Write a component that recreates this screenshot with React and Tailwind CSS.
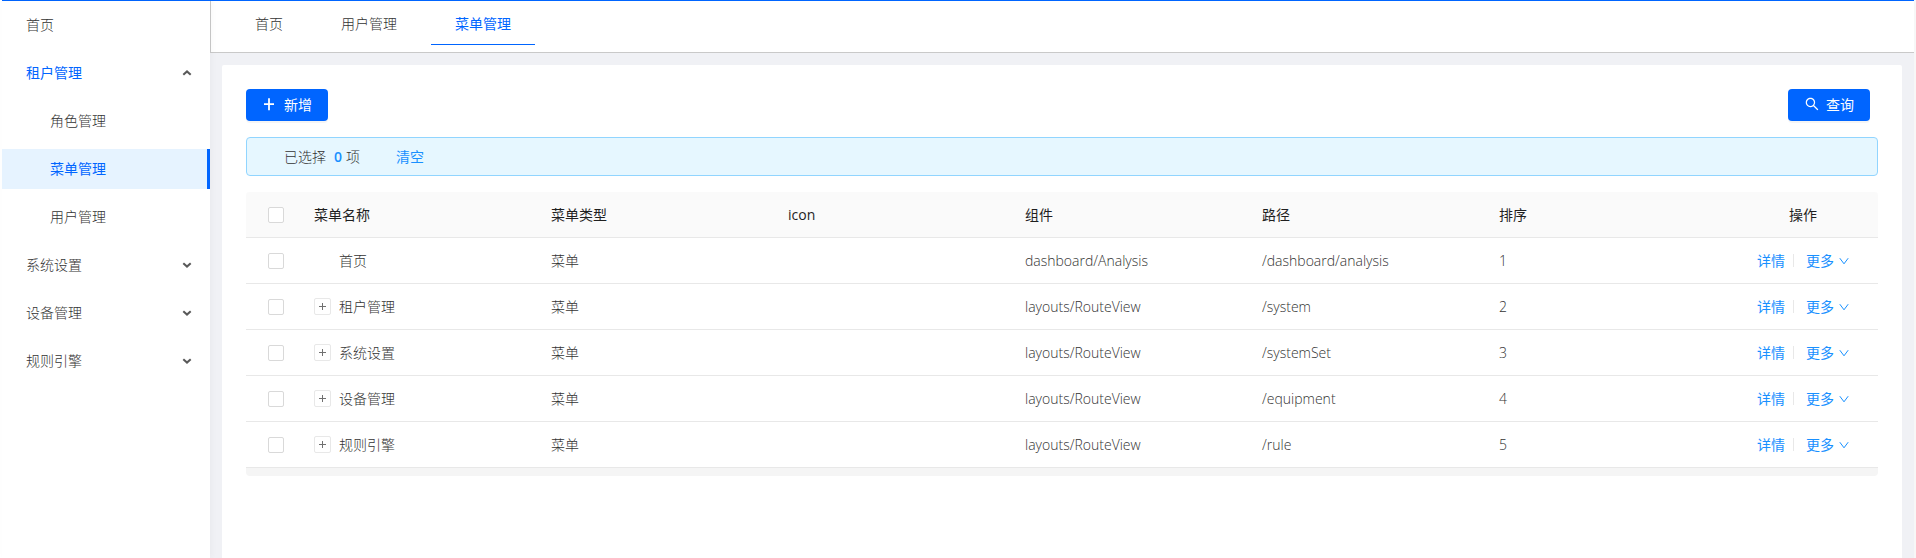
import { AiOutlineSearch } from "react-icons/ai";

const menu = [
  { label: "首页" },
  { label: "租户管理", open: true, children: ["角色管理", "菜单管理", "用户管理"] },
  { label: "系统设置", children: [] },
  { label: "设备管理", children: [] },
  { label: "规则引擎", children: [] },
];

const tabs = ["首页", "用户管理", "菜单管理"];
const active = "菜单管理";

const rows = [
  { name: "首页", leaf: true, component: "dashboard/Analysis", path: "/dashboard/analysis" },
  { name: "租户管理", component: "layouts/RouteView", path: "/system" },
  { name: "系统设置", component: "layouts/RouteView", path: "/systemSet" },
  { name: "设备管理", component: "layouts/RouteView", path: "/equipment" },
  { name: "规则引擎", component: "layouts/RouteView", path: "/rule" },
];

const headings = ["菜单名称", "菜单类型", "icon", "组件", "路径", "排序"];

function Tick({ label }) {
  return (
    <input
      type="checkbox"
      aria-label={label}
      className="block mx-auto size-4 appearance-none rounded-xs border border-[#d9d9d9] bg-white checked:bg-[#0065ff]"
    />
  );
}

function MenuArrow({ up }) {
  return (
    <svg viewBox="0 0 10 10" className="size-2.5" fill="none" stroke="#595959" strokeWidth="2">
      <path d={up ? "M1.3 6.8L5 3.4l3.7 3.4" : "M1.3 3.2L5 6.6l3.7-3.4"} />
    </svg>
  );
}

function Sidebar() {
  return (
    <nav className="z-10 w-52 shrink-0 bg-white pt-1 shadow-[2px_0_6px_rgba(0,21,41,0.03)]">
      <ul className="flex flex-col gap-2">
        {menu.map((item) => (
          <li key={item.label}>
            <a
              href="#"
              className={`flex h-10 items-center justify-between pl-6 pr-4.5 ${item.open ? "font-normal text-[#0065ff]" : ""}`}
            >
              {item.label}
              {item.children && <MenuArrow up={item.open} />}
            </a>
            {item.open && (
              <ul className="mt-2 flex flex-col gap-2">
                {item.children.map((child) => (
                  <li key={child}>
                    <a
                      href="#"
                      className={`flex h-10 items-center pl-12 ${
                        child === active ? "border-r-3 border-[#0065ff] bg-[#e6f3ff] font-normal text-[#0065ff]" : ""
                      }`}
                    >
                      {child}
                    </a>
                  </li>
                ))}
              </ul>
            )}
          </li>
        ))}
      </ul>
    </nav>
  );
}

export default function App() {
  return (
    <div className="min-h-screen bg-[#f7f7f7] pr-0.5 font-['Open_Sans','Noto_Sans_CJK_SC',sans-serif] text-sm font-light text-[#333333]">
      <div className="flex min-h-screen border-l-2 border-white bg-[#f0f1f5]">
        <div className="flex min-w-0 grow flex-col border-t border-[#0065ff]">
          <div className="flex grow">
            <Sidebar />
            <div className="flex min-w-0 grow flex-col">
              <header className="flex h-13 gap-2.5 border-b border-l border-[#c9c9c9] bg-white pl-5">
                {tabs.map((tab) => (
                  <a
                    key={tab}
                    href="#"
                    className={`flex h-11 items-center border-b px-6 pt-0.5 ${
                      tab === active ? "border-[#0065ff] font-normal text-[#0065ff]" : "border-transparent"
                    }`}
                  >
                    {tab}
                  </a>
                ))}
              </header>
              <main className="mx-3 mt-3 grow rounded-t-xs bg-white p-6">
                <div className="flex justify-between pr-2">
                  <button className="flex h-8 items-center gap-1.5 rounded bg-[#0065ff] px-4 font-normal text-white shadow-[0_2px_0_rgba(0,0,0,0.04)]">
                    <svg viewBox="0 0 16 16" className="mb-0.5 size-4" stroke="currentColor" strokeWidth="1.8">
                      <path d="M2 8.2h10M7 2.2v12" />
                    </svg>
                    新增
                  </button>
                  <button className="flex h-8 items-center gap-1.5 rounded bg-[#0065ff] px-4 font-normal text-white shadow-[0_2px_0_rgba(0,0,0,0.04)]">
                    <AiOutlineSearch className="mb-0.5 size-4" />
                    查询
                  </button>
                </div>
                <div className="mt-4 flex h-[39px] items-center rounded border border-[#91d5ff] bg-[#e6f7ff] pl-[37px]">
                  <span>已选择</span>
                  <span className="ml-2 mr-1 font-semibold text-[#1890ff]">0</span>
                  <span>项</span>
                  <button className="ml-9 font-normal text-[#1890ff]">清空</button>
                </div>
                <div className="mt-4 overflow-hidden rounded bg-[#f5f5f5] pb-2">
                  <table className="w-full table-fixed border-separate border-spacing-0 bg-white [&_td]:border-b [&_td]:border-[#e8e8e8] [&_th]:border-b [&_th]:border-[#e8e8e8]">
                    <thead>
                      <tr className="h-[46px] bg-[#fafafa] text-left text-[#1f1f1f]">
                        <th className="w-[60px]">
                          <Tick label="全选" />
                        </th>
                        {headings.map((h) => (
                          <th key={h} className={`px-2 ${h === "icon" ? "font-medium" : "font-normal"}`}>
                            {h}
                          </th>
                        ))}
                        <th className="w-[150px] text-center font-normal">操作</th>
                      </tr>
                    </thead>
                    <tbody>
                      {rows.map((row, i) => (
                        <tr key={row.name} className="h-[46px]">
                          <td>
                            <Tick label={row.name} />
                          </td>
                          <td className="px-2">
                            <div className={`flex items-center gap-2 ${row.leaf ? "pl-[25px]" : ""}`}>
                              {!row.leaf && (
                                <button
                                  aria-label={`展开${row.name}`}
                                  className="flex size-[17px] items-center justify-center rounded-xs border border-[#e8e8e8] bg-white"
                                >
                                  <svg viewBox="0 0 7 7" className="size-[7px]" stroke="#707070">
                                    <path d="M0 3.5h7M3.5 0v7" />
                                  </svg>
                                </button>
                              )}
                              {row.name}
                            </div>
                          </td>
                          <td className="px-2">菜单</td>
                          <td className="px-2"></td>
                          <td className="px-2">{row.component}</td>
                          <td className="px-2">{row.path}</td>
                          <td className="px-2">{i + 1}</td>
                          <td>
                            <div className="flex items-center justify-center font-normal text-[#1890ff]">
                              <a href="#">详情</a>
                              <span className="mx-2 h-[13px] w-px bg-[#e8e8e8]" />
                              <a href="#" className="ml-1 flex items-center gap-[5px]">
                                更多
                                <svg viewBox="0 0 10 10" className="size-2.5" fill="none" stroke="currentColor">
                                  <path d="M.8 2.2L5 7.8l4.2-5.6" />
                                </svg>
                              </a>
                            </div>
                          </td>
                        </tr>
                      ))}
                    </tbody>
                  </table>
                </div>
              </main>
            </div>
          </div>
        </div>
      </div>
    </div>
  );
}
